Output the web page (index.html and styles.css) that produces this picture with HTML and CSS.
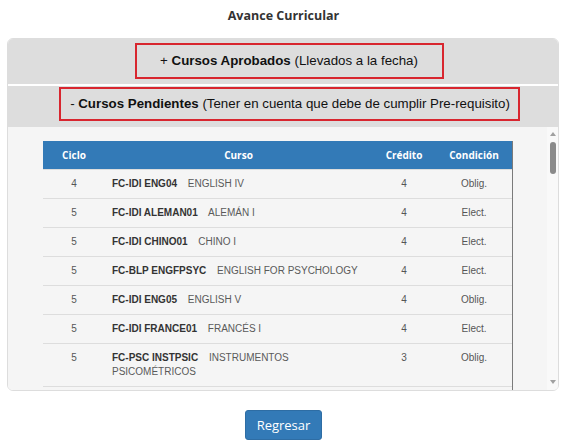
FILE: index.html
```html
<!DOCTYPE html>
<html lang="es">
<head>
    <meta charset="UTF-8">
    <meta name="viewport" content="width=device-width, initial-scale=1.0">
    <title>Avance Curricular</title>
    <link rel="stylesheet" href="styles.css">
</head>
<body>
    <h1 class="title">Avance Curricular</h1>

    <div class="panel">
        <div class="acc-head acc-first">
            <span class="mark mark-a">+ <b>Cursos Aprobados</b> (Llevados a la fecha)</span>
        </div>
        <div class="acc-head acc-second">
            <span class="mark mark-b">- <b>Cursos Pendientes</b> (Tener en cuenta que debe de cumplir Pre-requisito)</span>
        </div>

        <div class="acc-body">
            <div class="scroll-view">
                <div class="table-wrap">
                    <table class="courses">
                        <thead>
                            <tr>
                                <th class="c-ciclo">Ciclo</th>
                                <th class="c-curso">Curso</th>
                                <th class="c-cred">Crédito</th>
                                <th class="c-cond">Condición</th>
                            </tr>
                        </thead>
                        <tbody>
                            <tr>
                                <td class="c-ciclo">4</td>
                                <td class="c-curso"><b>FC-IDI ENG04</b> <span class="name">ENGLISH IV</span></td>
                                <td class="c-cred">4</td>
                                <td class="c-cond">Oblig.</td>
                            </tr>
                            <tr>
                                <td class="c-ciclo">5</td>
                                <td class="c-curso"><b>FC-IDI ALEMAN01</b> <span class="name">ALEMÁN I</span></td>
                                <td class="c-cred">4</td>
                                <td class="c-cond">Elect.</td>
                            </tr>
                            <tr>
                                <td class="c-ciclo">5</td>
                                <td class="c-curso"><b>FC-IDI CHINO01</b> <span class="name">CHINO I</span></td>
                                <td class="c-cred">4</td>
                                <td class="c-cond">Elect.</td>
                            </tr>
                            <tr>
                                <td class="c-ciclo">5</td>
                                <td class="c-curso"><b>FC-BLP ENGFPSYC</b> <span class="name">ENGLISH FOR PSYCHOLOGY</span></td>
                                <td class="c-cred">4</td>
                                <td class="c-cond">Elect.</td>
                            </tr>
                            <tr>
                                <td class="c-ciclo">5</td>
                                <td class="c-curso"><b>FC-IDI ENG05</b> <span class="name">ENGLISH V</span></td>
                                <td class="c-cred">4</td>
                                <td class="c-cond">Oblig.</td>
                            </tr>
                            <tr>
                                <td class="c-ciclo">5</td>
                                <td class="c-curso"><b>FC-IDI FRANCE01</b> <span class="name">FRANCÉS I</span></td>
                                <td class="c-cred">4</td>
                                <td class="c-cond">Elect.</td>
                            </tr>
                            <tr>
                                <td class="c-ciclo">5</td>
                                <td class="c-curso"><b>FC-PSC INSTPSIC</b> <span class="name">INSTRUMENTOS</span> <span class="name">PSICOMÉTRICOS</span></td>
                                <td class="c-cred">3</td>
                                <td class="c-cond">Oblig.</td>
                            </tr>
                            <tr>
                                <td class="c-ciclo">&nbsp;</td>
                                <td class="c-curso">&nbsp;</td>
                                <td class="c-cred">&nbsp;</td>
                                <td class="c-cond">&nbsp;</td>
                            </tr>
                        </tbody>
                    </table>
                </div>
            </div>
            <div class="scrollbar">
                <span class="sb-up"></span>
                <span class="sb-thumb"></span>
                <span class="sb-down"></span>
            </div>
        </div>
    </div>

    <div class="actions">
        <button class="btn-back">Regresar</button>
    </div>
</body>
</html>
```

FILE: styles.css
```css
body {
    margin: 0;
    font-family: "Liberation Sans", Arial, sans-serif;
    color: #333;
    background: #fff;
}
.title {
    margin: 0;
    padding-top: 7px;
    height: 18px;
    margin-bottom: 13px;
    font-family: "Open Sans", sans-serif;
    font-size: 12.5px;
    line-height: 18px;
    font-weight: bold;
    text-align: center;
    color: #333;
}
.panel {
    margin: 0 8px 0 7px;
    border: 1px solid #ddd;
    border-radius: 6px;
    overflow: hidden;
    background: #fff;
}
.acc-head {
    background: #dddddd;
    text-align: center;
    color: #111;
    font-size: 13.3px;
    padding-left: 13px;
}
.acc-first {
    height: 45px;
    padding-top: 4px;
    box-sizing: border-box;
}
.acc-second {
    margin-top: 2px;
    height: 41px;
    padding-top: 1px;
    box-sizing: border-box;
}
.mark {
    display: inline-block;
    border: 2px solid #d8262f;
}
.mark-a {
    line-height: 32px;
    padding: 0 24px 0 23px;
}
.mark-b {
    line-height: 30px;
    padding: 0 8px 0 9px;
}
.acc-body {
    display: flex;
    height: 263px;
    background: #f5f5f5;
}
.scroll-view {
    flex: 1;
    overflow: hidden;
    padding: 14px 0 0 35px;
}
.scrollbar {
    width: 11px;
    background: #f9f9f9;
    display: flex;
    flex-direction: column;
    align-items: center;
}
.sb-up {
    margin-top: 5px;
    border-left: 3px solid transparent;
    border-right: 3px solid transparent;
    border-bottom: 4px solid #a0a0a0;
}
.sb-thumb {
    margin-top: 6px;
    width: 6px;
    height: 32px;
    border-radius: 3px;
    background: #8a8a8a;
}
.sb-down {
    margin-top: auto;
    margin-bottom: 6px;
    border-left: 3px solid transparent;
    border-right: 3px solid transparent;
    border-top: 4px solid #a0a0a0;
}
.table-wrap {
    width: 469px;
    min-height: 600px;
    border-right: 1px solid #7a7a7a;
}
.courses {
    width: 469px;
    border-collapse: collapse;
    table-layout: fixed;
    font-size: 10px;
}
.courses th {
    background: #337ab7;
    color: #fff;
    font-family: "Open Sans", sans-serif;
    font-size: 10px;
    font-weight: bold;
    line-height: 14px;
    padding: 7px 8px;
    text-align: center;
}
.courses td {
    border-top: 1px solid #ddd;
    padding: 7px 8px;
    line-height: 14px;
    vertical-align: top;
    color: #555;
}
.courses td b {
    color: #333;
    margin-right: 8px;
}
.courses .name {
    color: #5a5a5a;
}
.courses .c-ciclo {
    width: 46px;
    text-align: center;
}
.courses .c-curso {
    width: 251px;
}
.courses td.c-curso {
    text-align: left;
    padding-left: 7px;
}
.courses .c-cred {
    width: 48px;
    text-align: center;
}
.courses .c-cond {
    text-align: center;
}
.actions {
    text-align: center;
    padding-top: 19px;
}
.btn-back {
    font-family: "Open Sans", sans-serif;
    font-size: 13px;
    line-height: 16px;
    padding: 6px 11px;
    color: #fff;
    background: #337ab7;
    border: 1px solid #2e6da4;
    border-radius: 3px;
}
```
